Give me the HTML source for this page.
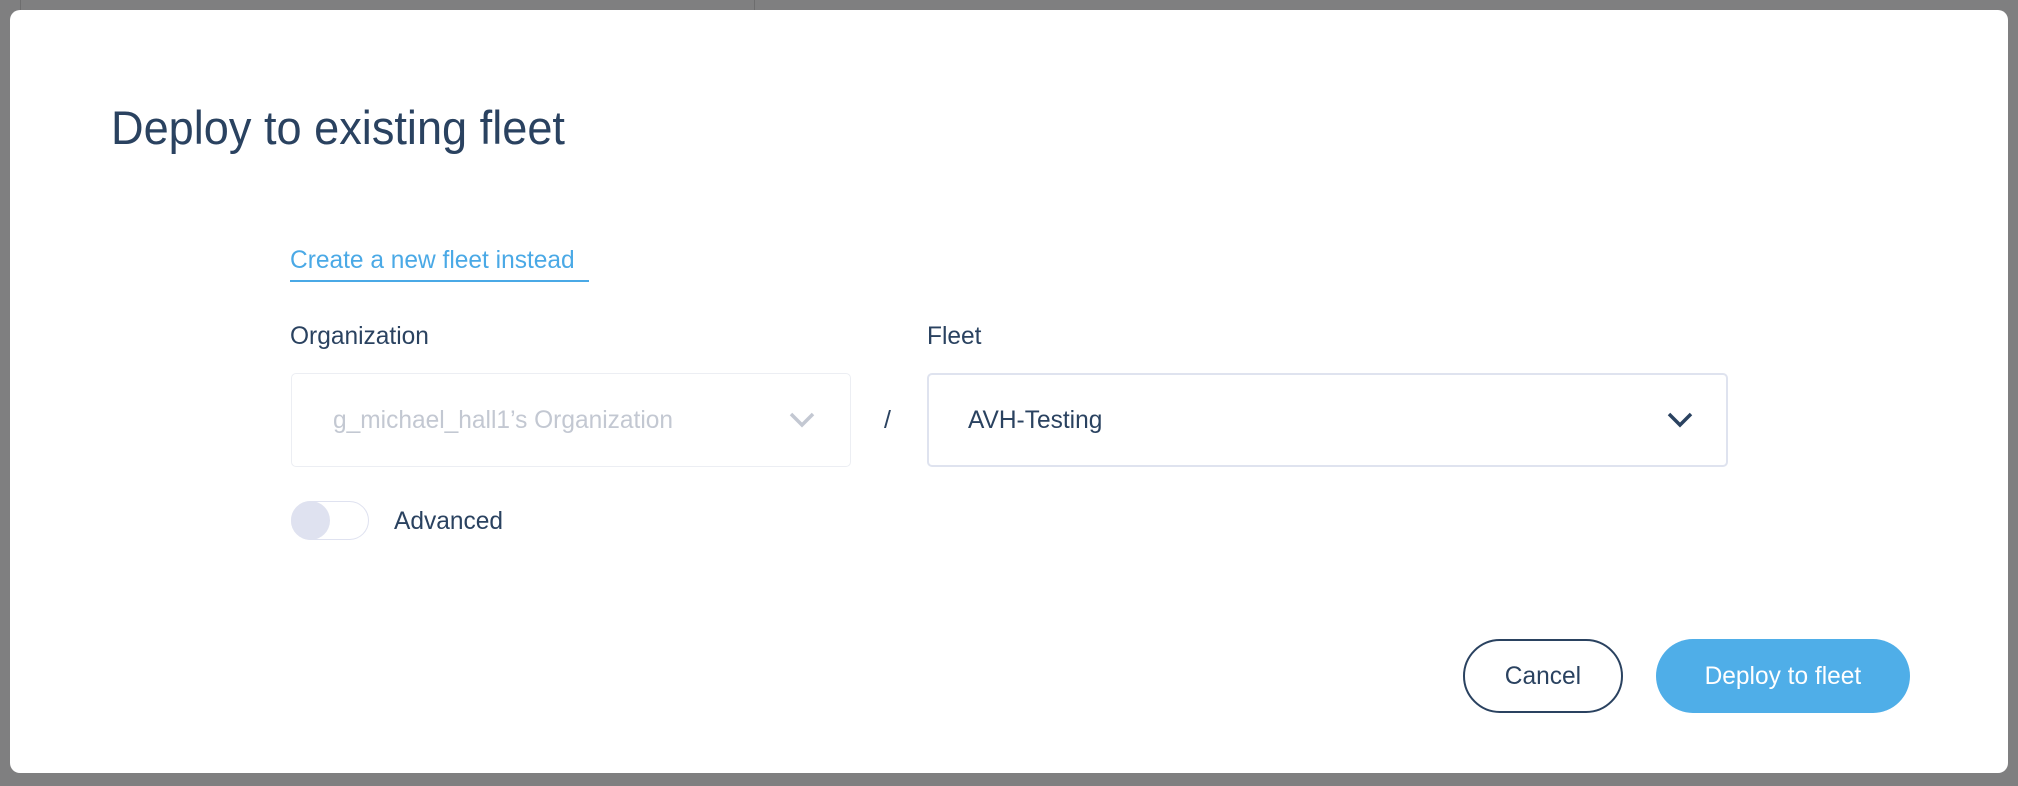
<!DOCTYPE html>
<html><head><style>
body{margin:0;width:2018px;height:786px;background:#7f7f80;position:relative;overflow:hidden;font-family:"Liberation Sans",sans-serif;color:#2a4260}
.a{position:absolute}
.modal{left:10px;top:10px;width:1998px;height:763px;background:#fff;border-radius:10px}
.t{white-space:nowrap;transform-origin:left center}
</style></head><body>
<div class="a" style="left:20px;top:0;width:1px;height:10px;background:#6d6d6e"></div>
<div class="a" style="left:754px;top:0;width:1px;height:10px;background:#6d6d6e"></div>
<div class="a modal"></div>
<div class="a t" style="left:111px;top:100px;font-size:47px;line-height:56px;transform:scaleX(0.96)">Deploy to existing fleet</div>
<div class="a t" style="left:290px;top:245px;font-size:25px;line-height:30px;color:#4aa9e6;transform:scaleX(0.98)">Create a new fleet instead</div>
<div class="a" style="left:290px;top:280px;width:299px;height:2px;background:#4aa9e6"></div>
<div class="a t" style="left:290px;top:321px;font-size:25px;line-height:30px;transform:scaleX(0.98)">Organization</div>
<div class="a t" style="left:927px;top:321px;font-size:25px;line-height:30px;transform:scaleX(0.98)">Fleet</div>
<div class="a" style="left:291px;top:373px;width:558px;height:92px;border:1px solid #eceef3;border-radius:5px"></div>
<div class="a t" style="left:333px;top:405px;font-size:25px;line-height:30px;color:#c3c8d2;transform:scaleX(0.98)">g_michael_hall1’s Organization</div>
<svg class="a" style="left:788px;top:410px" width="28" height="20" viewBox="0 0 28 20"><path d="M3 4 L14 15 L25 4" fill="none" stroke="#c3c8d2" stroke-width="3.5"/></svg>
<div class="a t" style="left:884px;top:405px;font-size:25px;line-height:30px">/</div>
<div class="a" style="left:927px;top:373px;border:2px solid #dfe3ef;border-radius:5px;box-sizing:border-box;height:94px;width:801px"></div>
<div class="a t" style="left:968px;top:405px;font-size:25px;line-height:30px;transform:scaleX(0.98)">AVH-Testing</div>
<svg class="a" style="left:1666px;top:410px" width="28" height="20" viewBox="0 0 28 20"><path d="M3 4 L14 15 L25 4" fill="none" stroke="#2a4260" stroke-width="3.5"/></svg>
<div class="a" style="left:291px;top:501px;width:78px;height:39px;border:1.5px solid #dfe2f0;border-radius:20px;box-sizing:border-box"></div>
<div class="a" style="left:291px;top:501px;width:39px;height:39px;border-radius:50%;background:#dfe2f0"></div>
<div class="a t" style="left:394px;top:506px;font-size:25px;line-height:30px;transform:scaleX(0.98)">Advanced</div>
<div class="a" style="left:1463px;top:639px;width:160px;height:74px;border:2px solid #2a4260;border-radius:37px;box-sizing:border-box"></div>
<div class="a" style="left:1463px;top:639px;width:160px;height:74px;line-height:74px;text-align:center;font-size:25px"><span style="display:inline-block;transform:scaleX(0.98)">Cancel</span></div>
<div class="a" style="left:1656px;top:639px;width:254px;height:74px;line-height:74px;text-align:center;font-size:25px;background:#4faee8;border-radius:37px;color:#fff"><span style="display:inline-block;transform:scaleX(0.98)">Deploy to fleet</span></div>
</body></html>
